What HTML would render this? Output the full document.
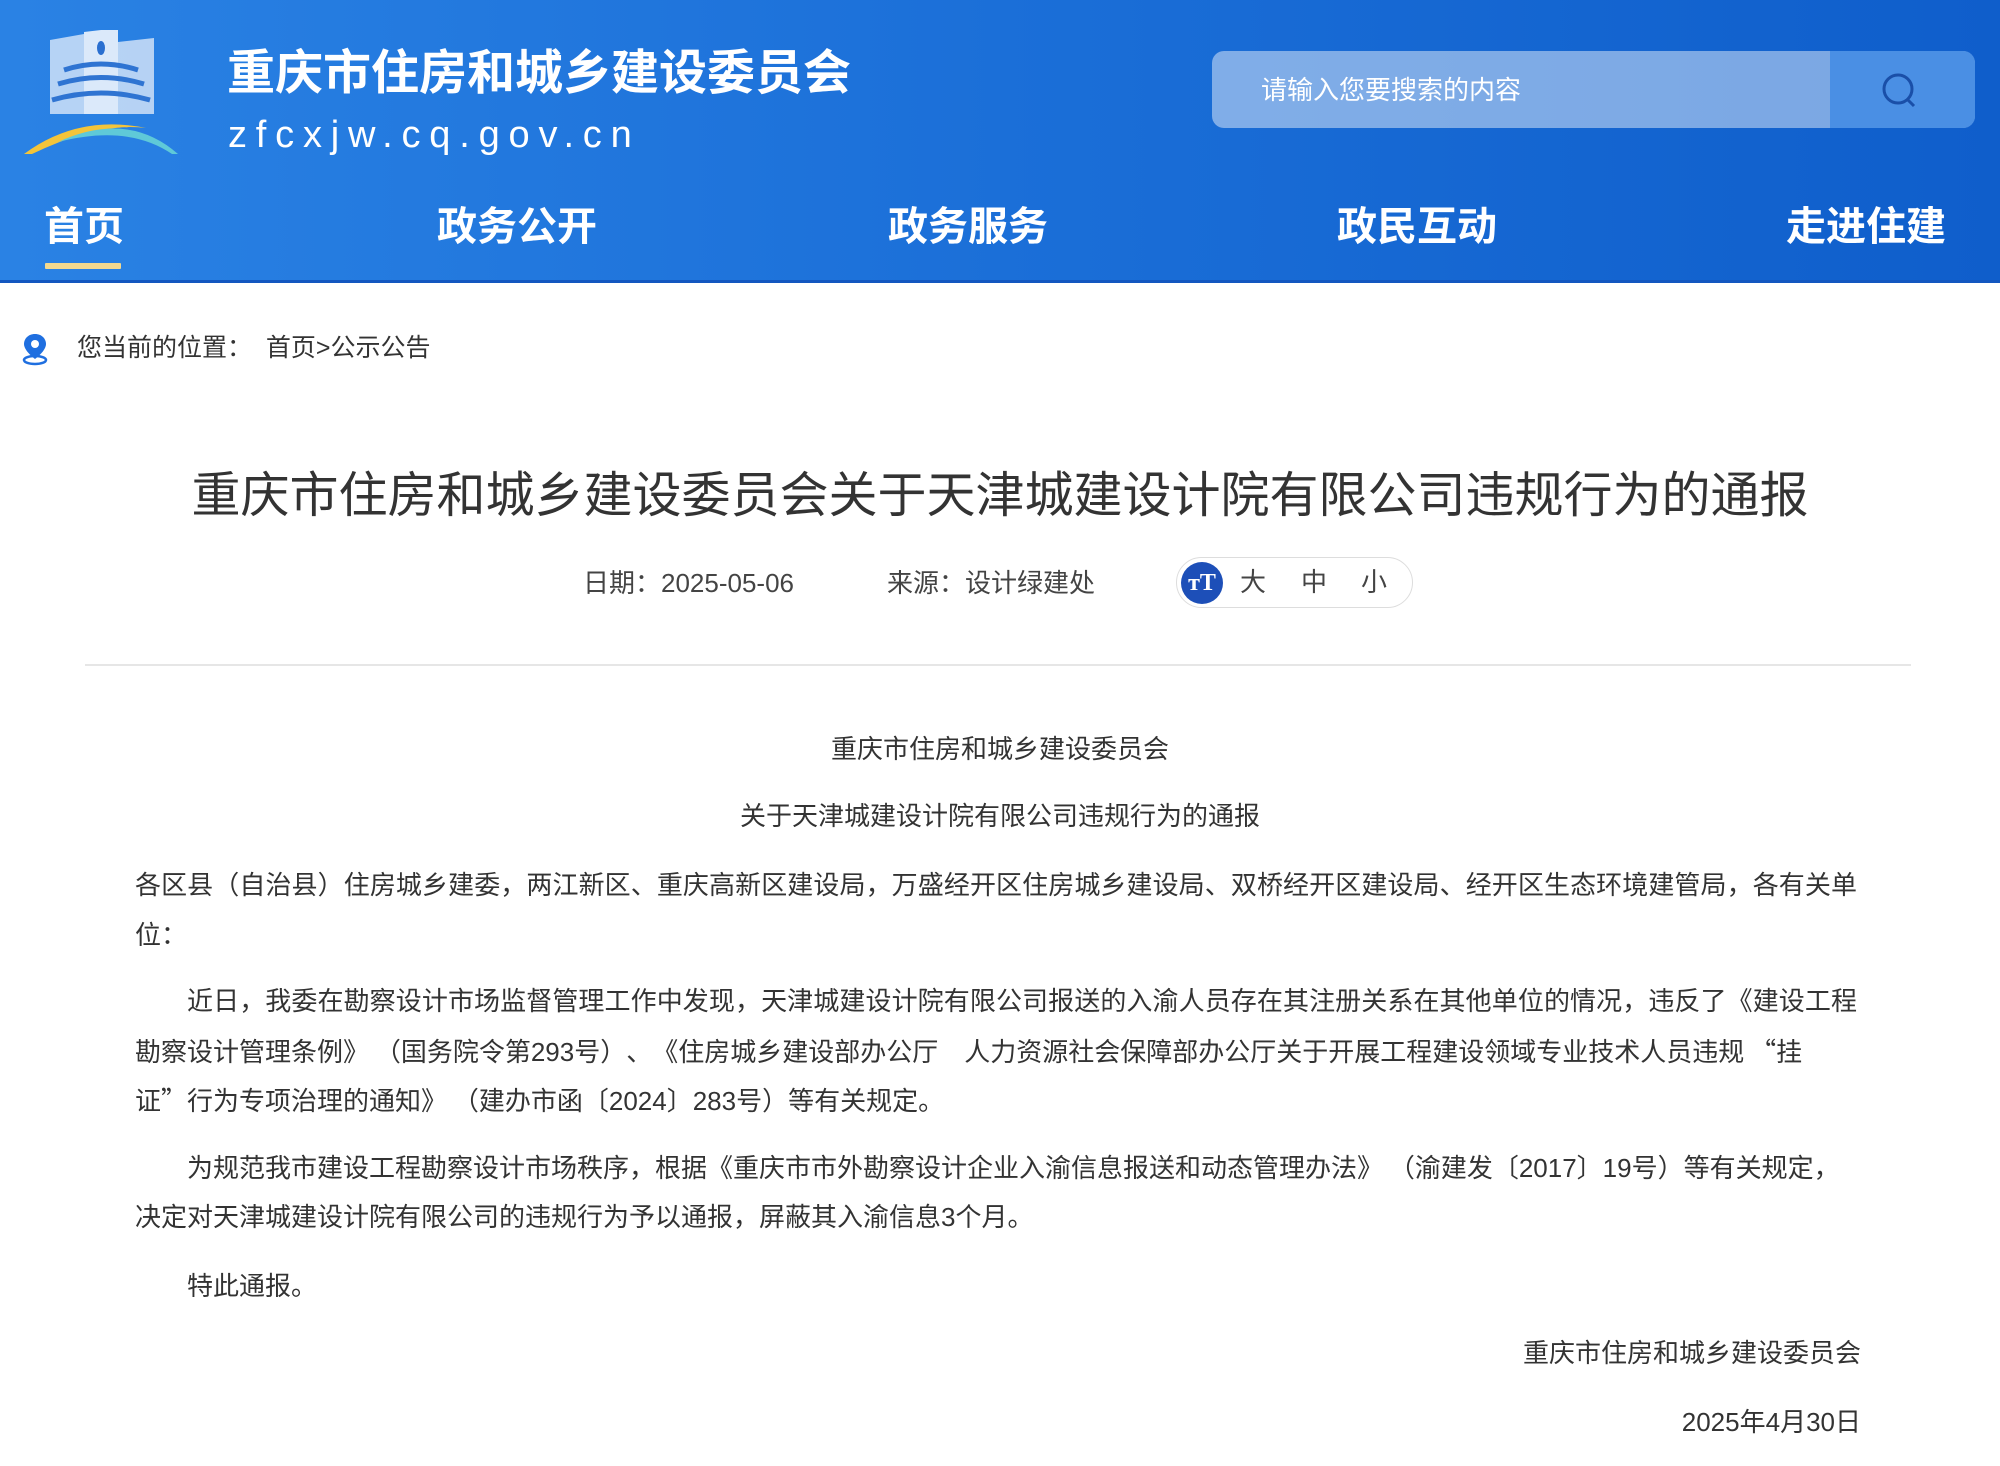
<!DOCTYPE html>
<html><head><meta charset="utf-8">
<style>
*{margin:0;padding:0;box-sizing:border-box}
body{width:2000px;height:1466px;background:#fff;font-family:"Liberation Sans","Noto Sans CJK SC",sans-serif;color:#333;position:relative;overflow:hidden;text-spacing-trim:space-all}
.q{font-family:"Noto Sans CJK SC",sans-serif}
.hd{position:absolute;left:0;top:0;width:2000px;height:283px;background:linear-gradient(90deg,#2a82e4 0%,#1b6fd8 50%,#0f5ecb 100%)}
.hd .bl{position:absolute;left:0;top:280px;width:2000px;height:3px;background:#1357c0}
.t1{position:absolute;left:227px;top:44px;font-size:48px;font-weight:bold;color:#fff;white-space:nowrap;line-height:60px}
.t2{position:absolute;left:228px;top:110px;font-size:38px;color:#fff;letter-spacing:8.8px;line-height:50px;white-space:nowrap}
.search{position:absolute;left:1212px;top:51px;width:763px;height:77px;border-radius:12px;background:rgba(255,255,255,0.45);overflow:hidden}
.search .btn{position:absolute;right:0;top:0;width:145px;height:77px;background:#4a8fe4}
.search .ph{position:absolute;left:49px;top:22px;font-size:26px;color:#fff;line-height:34px}
.nav{position:absolute;top:201px;font-size:40px;font-weight:bold;color:#fff;line-height:52px;white-space:nowrap}
.ul{position:absolute;left:45px;top:263px;width:76px;height:6px;background:#f3d98f;border-radius:1px}
.bc{position:absolute;left:77px;top:331px;font-size:25px;line-height:34px;color:#333;white-space:nowrap}
h1{position:absolute;left:0;width:2000px;top:464px;text-align:center;font-size:49px;font-weight:normal;line-height:64px;color:#333;white-space:nowrap}
.meta{position:absolute;top:566px;font-size:26px;line-height:34px;color:#444;white-space:nowrap}
.tog{position:absolute;left:1176px;top:557px;width:237px;height:51px;border:1px solid #ddd;border-radius:26px;background:#fff}
.tog .ic{position:absolute;left:4px;top:4px;width:42px;height:42px;border-radius:50%;background:#1d4fb8;color:#fff;font-family:"Liberation Serif",serif;font-weight:bold;font-size:24px;text-align:center;line-height:42px}
.tog span.s{position:absolute;top:7px;font-size:26px;line-height:34px;color:#444}
hr{position:absolute;left:85px;top:664px;width:1826px;border:0;border-top:2px solid #e6e6e6}
.c{position:absolute;left:0;width:2000px;text-align:center;font-size:26px;line-height:34px;color:#333}
.ln{position:absolute;left:135px;width:1722px;font-size:26px;line-height:34px;color:#333;white-space:nowrap}
.j{text-align:justify;text-align-last:justify}
.r{position:absolute;right:139px;font-size:26px;line-height:34px;color:#333;white-space:nowrap}
</style></head><body>
<div class="hd">
<svg style="position:absolute;left:18px;top:30px" width="165" height="126" viewBox="0 0 165 126">
<polygon points="32,10 66,4 66,84 32,84" fill="#c5dcf6" opacity="0.9"/>
<polygon points="66,2 100,-2 100,84 66,84" fill="#dbe9fa"/>
<polygon points="100,12 136,8 136,84 100,84" fill="#c5dcf6" opacity="0.9"/>
<ellipse cx="83" cy="18" rx="4" ry="7" fill="#2a6fd0"/>
<path d="M46 40 Q83 28 120 40" stroke="#2f74d2" stroke-width="5" fill="none"/>
<path d="M40 54 Q83 41 126 54" stroke="#2f74d2" stroke-width="5" fill="none"/>
<path d="M34 70 Q83 56 132 70" stroke="#2f74d2" stroke-width="5" fill="none"/>
<path d="M6 124 Q60 84 128 98 Q80 92 14 124 Z" fill="#f3c43a"/>
<path d="M40 112 Q110 80 160 124 L154 124 Q110 94 40 112 Z" fill="#5fc9d8"/>
</svg>
<div class="t1">重庆市住房和城乡建设委员会</div>
<div class="t2">zfcxjw.cq.gov.cn</div>
<div class="search"><div class="ph">请输入您要搜索的内容</div><div class="btn">
<svg style="position:absolute;left:50px;top:20px" width="40" height="40" viewBox="0 0 40 40"><circle cx="18" cy="18" r="14" stroke="#1a4fa8" stroke-width="3" fill="none"/><path d="M28 29 L34 35" stroke="#1a4fa8" stroke-width="3"/></svg></div></div>
<div class="nav" style="left:44px">首页</div>
<div class="nav" style="left:437px">政务公开</div>
<div class="nav" style="left:888px">政务服务</div>
<div class="nav" style="left:1337px">政民互动</div>
<div class="nav" style="left:1786px">走进住建</div>
<div class="ul"></div>
<div class="bl"></div>
</div>
<svg style="position:absolute;left:20px;top:332px" width="30" height="34" viewBox="0 0 30 34"><path d="M15 2 C8 2 4 7 4 12 C4 19 15 27 15 27 C15 27 26 19 26 12 C26 7 22 2 15 2 Z" fill="#1f6fe0"/><circle cx="15" cy="12" r="4" fill="#fff"/><ellipse cx="15" cy="28" rx="11" ry="4" stroke="#1f6fe0" stroke-width="2.5" fill="none"/></svg>
<div class="bc">您当前的位置：&nbsp;&nbsp;首页&gt;公示公告</div>
<h1>重庆市住房和城乡建设委员会关于天津城建设计院有限公司违规行为的通报</h1>
<div class="meta" style="left:583px">日期：2025-05-06</div>
<div class="meta" style="left:887px">来源：设计绿建处</div>
<div class="tog"><div class="ic">тT</div><span class="s" style="left:63px">大</span><span class="s" style="left:124px">中</span><span class="s" style="left:184px">小</span></div>
<hr>
<div class="c" style="top:732px">重庆市住房和城乡建设委员会</div>
<div class="c" style="top:799px">关于天津城建设计院有限公司违规行为的通报</div>
<div class="ln j" style="top:868px">各区县（自治县）住房城乡建委，两江新区、重庆高新区建设局，万盛经开区住房城乡建设局、双桥经开区建设局、经开区生态环境建管局，各有关单</div>
<div class="ln" style="top:918px">位：</div>
<div class="ln j" style="top:984px;padding-left:52px">近日，我委在勘察设计市场监督管理工作中发现，天津城建设计院有限公司报送的入渝人员存在其注册关系在其他单位的情况，违反了《建设工程</div>
<div class="ln" style="top:1034px">勘察设计管理条例<span class="q">》&nbsp;（</span>国务院令第293号<span class="q">）、《</span>住房城乡建设部办公厅　人力资源社会保障部办公厅关于开展工程建设领域专业技术人员违规<span class="q">&nbsp;“</span>挂</div>
<div class="ln" style="top:1083px">证<span class="q">”</span>行为专项治理的通知<span class="q">》&nbsp;（</span>建办市函〔2024〕283号）等有关规定。</div>
<div class="ln" style="top:1150px;padding-left:52px">为规范我市建设工程勘察设计市场秩序，根据《重庆市市外勘察设计企业入渝信息报送和动态管理办法<span class="q">》&nbsp;（</span>渝建发〔2017〕19号）等有关规定，</div>
<div class="ln" style="top:1200px">决定对天津城建设计院有限公司的违规行为予以通报，屏蔽其入渝信息3个月。</div>
<div class="ln" style="top:1269px;padding-left:52px">特此通报。</div>
<div class="r" style="top:1336px">重庆市住房和城乡建设委员会</div>
<div class="r" style="top:1405px">2025年4月30日</div>
</body></html>
